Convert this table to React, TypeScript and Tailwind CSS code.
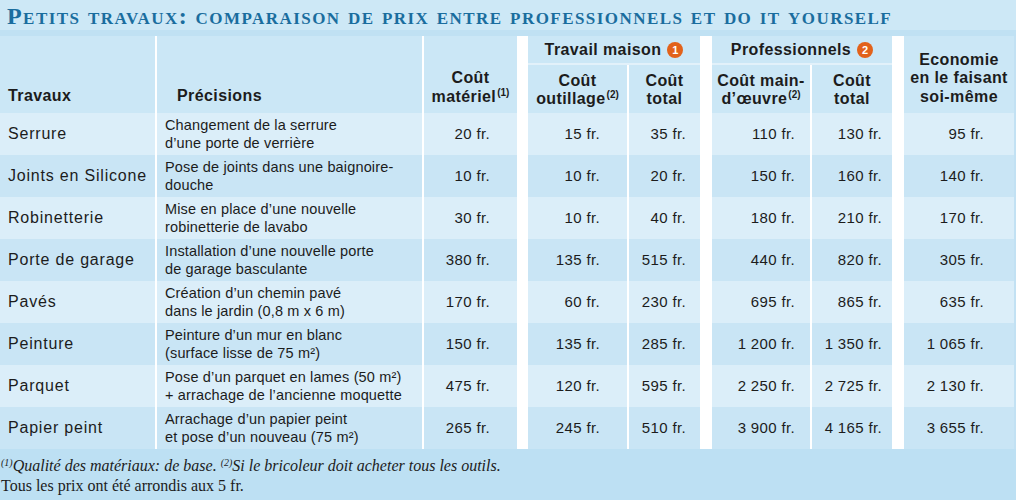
import React from "react";

const GRID =
  "grid grid-cols-[155px_2px_265px_2px_93px_11px_99px_2px_71px_12px_98px_2px_80px_12px_110px_2px]";

type Row = {
  name: string;
  desc: React.ReactNode[];
  vals: string[];
};

const sq = <span>²</span>;

const rows: Row[] = [
  { name: "Serrure", desc: ["Changement de la serrure", "d’une porte de verrière"], vals: ["20 fr.", "15 fr.", "35 fr.", "110 fr.", "130 fr.", "95 fr."] },
  { name: "Joints en Silicone", desc: ["Pose de joints dans une baignoire-", "douche"], vals: ["10 fr.", "10 fr.", "20 fr.", "150 fr.", "160 fr.", "140 fr."] },
  { name: "Robinetterie", desc: ["Mise en place d’une nouvelle", "robinetterie de lavabo"], vals: ["30 fr.", "10 fr.", "40 fr.", "180 fr.", "210 fr.", "170 fr."] },
  { name: "Porte de garage", desc: ["Installation d’une nouvelle porte", "de garage basculante"], vals: ["380 fr.", "135 fr.", "515 fr.", "440 fr.", "820 fr.", "305 fr."] },
  { name: "Pavés", desc: ["Création d’un chemin pavé", "dans le jardin (0,8 m x 6 m)"], vals: ["170 fr.", "60 fr.", "230 fr.", "695 fr.", "865 fr.", "635 fr."] },
  { name: "Peinture", desc: ["Peinture d’un mur en blanc", <>(surface lisse de 75 m{sq})</>], vals: ["150 fr.", "135 fr.", "285 fr.", "1\u00a0200 fr.", "1\u00a0350 fr.", "1\u00a0065 fr."] },
  { name: "Parquet", desc: [<>Pose d’un parquet en lames (50 m{sq})</>, "+ arrachage de l’ancienne moquette"], vals: ["475 fr.", "120 fr.", "595 fr.", "2\u00a0250 fr.", "2\u00a0725 fr.", "2\u00a0130 fr."] },
  { name: "Papier peint", desc: ["Arrachage d’un papier peint", <>et pose d’un nouveau (75 m{sq})</>], vals: ["265 fr.", "245 fr.", "510 fr.", "3\u00a0900 fr.", "4\u00a0165 fr.", "3\u00a0655 fr."] },
];

const Sup = ({ n }: { n: string }) => (
  <sup className="text-[10px] top-[-6px] ml-[1px] tracking-normal">({n})</sup>
);

const Badge = ({ n }: { n: string }) => (
  <span className="inline-flex items-center justify-center w-4 h-4 rounded-full bg-[#e2621b] text-white text-[11px] font-bold ml-[6px] leading-none tracking-normal">
    {n}
  </span>
);

export default function App() {
  return (
    <div className="w-[1016px] h-[500px] overflow-hidden bg-[#bde0f3] font-['Liberation_Sans',Arial,sans-serif] text-[#1c1c1c]">
      {/* Title */}
      <div className="h-[30px] bg-[#cde8f6] pl-[7px] pt-[4px]">
        <h1 className="font-['Liberation_Serif',serif] font-bold text-[24px] leading-[24px] tracking-[1.45px] text-[#1a6d9e] [font-variant-caps:small-caps] whitespace-nowrap">
          Petits travaux: comparaison de prix entre professionnels et do it yourself
        </h1>
      </div>
      <div className="h-[6px] bg-[#c0e1f3]" />

      {/* Header */}
      <div className={`${GRID} grid-rows-[27px_2px_48px] bg-white font-bold text-[16px] leading-[18.5px] tracking-[0.4px]`}>
        <div className="col-start-1 row-start-1 row-span-3 bg-[#cbe7f6] flex items-end pl-2 pb-[8px]">Travaux</div>
        <div className="col-start-3 row-start-1 row-span-3 bg-[#cbe7f6] flex items-end pl-[20px] pb-[8px]">Précisions</div>
        <div className="col-start-5 row-start-1 row-span-3 bg-[#cbe7f6] flex flex-col items-center justify-end pb-[7px] text-center">
          <span>Coût</span>
          <span>
            matériel<Sup n="1" />
          </span>
        </div>
        <div className="col-start-7 col-span-3 row-start-1 bg-[#cbe7f6] flex items-center justify-center pt-[1px]">
          Travail maison
          <Badge n="1" />
        </div>
        <div className="col-start-7 col-span-3 row-start-2 bg-[#e2f1fa]" />
        <div className="col-start-7 row-start-3 bg-[#cbe7f6] flex flex-col items-center justify-center text-center pt-[2px]">
          <span>Coût</span>
          <span>
            outillage<Sup n="2" />
          </span>
        </div>
        <div className="col-start-9 row-start-3 bg-[#cbe7f6] flex flex-col items-center justify-center text-center pt-[2px]">
          <span>Coût</span>
          <span>total</span>
        </div>
        <div className="col-start-11 col-span-3 row-start-1 bg-[#cbe7f6] flex items-center justify-center pt-[1px]">
          Professionnels
          <Badge n="2" />
        </div>
        <div className="col-start-11 col-span-3 row-start-2 bg-[#e2f1fa]" />
        <div className="col-start-11 row-start-3 bg-[#cbe7f6] flex flex-col items-center justify-center text-center pt-[2px]">
          <span>Coût main-</span>
          <span>
            d’œuvre<Sup n="2" />
          </span>
        </div>
        <div className="col-start-13 row-start-3 bg-[#cbe7f6] flex flex-col items-center justify-center text-center pt-[2px]">
          <span>Coût</span>
          <span>total</span>
        </div>
        <div className="col-start-15 row-start-1 row-span-3 bg-[#cbe7f6] flex flex-col items-center justify-end pb-[7px] text-center">
          <span>Economie</span>
          <span>en le faisant</span>
          <span>soi-même</span>
        </div>
        <div className="col-start-16 row-start-1 row-span-3 bg-[#c2e1f3]" />
      </div>

      {/* Body */}
      {rows.map((r, i) => {
        const bg = i % 2 === 0 ? "bg-[#dbeef9]" : "bg-[#c9e5f5]";
        return (
          <div key={r.name} className={`${GRID} h-[42px] bg-white`}>
            <div className={`col-start-1 ${bg} flex items-center pl-2 text-[16px] tracking-[0.8px]`}>{r.name}</div>
            <div className={`col-start-3 ${bg} flex flex-col justify-center pl-2 text-[14.5px] leading-[18px] tracking-[0.15px]`}>
              <span>{r.desc[0]}</span>
              <span>{r.desc[1]}</span>
            </div>
            <div className={`col-start-5 ${bg} flex items-center justify-end pr-[27px] text-[15px] tracking-[0.35px]`}>{r.vals[0]}</div>
            <div className={`col-start-7 ${bg} flex items-center justify-end pr-[27px] text-[15px] tracking-[0.35px]`}>{r.vals[1]}</div>
            <div className={`col-start-9 ${bg} flex items-center justify-end pr-[14px] text-[15px] tracking-[0.35px]`}>{r.vals[2]}</div>
            <div className={`col-start-11 ${bg} flex items-center justify-end pr-[15px] text-[15px] tracking-[0.35px]`}>{r.vals[3]}</div>
            <div className={`col-start-13 ${bg} flex items-center justify-end pr-[10px] text-[15px] tracking-[0.35px]`}>{r.vals[4]}</div>
            <div className={`col-start-15 ${bg} flex items-center justify-end pr-[30px] text-[15px] tracking-[0.35px]`}>{r.vals[5]}</div>
            <div className="col-start-16 bg-[#c2e1f3]" />
          </div>
        );
      })}

      {/* Footer */}
      <div className="pt-[7px] pl-[1px] font-['Liberation_Serif',serif] text-[16px] leading-[20px] text-[#1c1c1c]">
        <div className="italic">
          <sup className="text-[10px]">(1)</sup>Qualité des matériaux: de base. <sup className="text-[10px]">(2)</sup>Si le bricoleur doit acheter tous les outils.
        </div>
        <div>Tous les prix ont été arrondis aux 5 fr.</div>
      </div>
    </div>
  );
}
